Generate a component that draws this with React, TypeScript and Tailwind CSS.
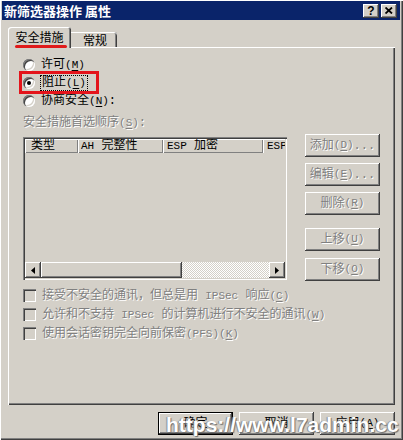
import React from 'react';

const raised =
    'shadow-[inset_-1px_-1px_0_#404040,inset_1px_1px_0_#ffffff,inset_-2px_-2px_0_#808080,inset_2px_2px_0_#d4d0c8]';
const sunken =
    'shadow-[inset_1px_1px_0_#808080,inset_2px_2px_0_#404040,inset_-1px_-1px_0_#ffffff,inset_-2px_-2px_0_#d4d0c8]';
const grayText = 'text-[#808080] [text-shadow:1px_1px_0_#ffffff]';

// access key hint such as "(M)", drawn narrow like the old bitmap font
function K({children}: {children: React.ReactNode}) {
    return (
        <span className="text-[11px]">
            (<span className="underline underline-offset-2">{children}</span>)
        </span>
    );
}

function Radio({checked}: {checked?: boolean}) {
    return (
        <span className={`w-[12px] h-[12px] rounded-full bg-white flex items-center justify-center shrink-0 ${sunken}`}>
            {checked && <span className="w-[4px] h-[4px] rounded-full bg-black" />}
        </span>
    );
}

function Check({children}: {children: React.ReactNode}) {
    return (
        <div className="flex items-center h-[19px]">
            <span className={`w-[13px] h-[13px] shrink-0 bg-[#d4d0c8] ${sunken}`} />
            <span className={`ml-[6px] whitespace-nowrap ${grayText}`}>{children}</span>
        </div>
    );
}

function SideButton({children, className = ''}: {children: React.ReactNode; className?: string}) {
    return (
        <div className={`w-[75px] h-[23px] flex items-center justify-center whitespace-nowrap ${raised} ${grayText} ${className}`}>
            {children}
        </div>
    );
}

function Arrow({dir}: {dir: 'left' | 'right'}) {
    return (
        <div className={`w-[16px] h-[16px] shrink-0 flex items-center justify-center bg-[#d4d0c8] ${raised}`}>
            <svg width="4" height="7" viewBox="0 0 4 7">
                {dir === 'left' ? <polygon points="4,0 4,7 0,3.5" fill="#000" /> : <polygon points="0,0 0,7 4,3.5" fill="#000" />}
            </svg>
        </div>
    );
}

export default function App() {
    return (
        <div className="w-[403px] h-[440px] bg-[#d4d0c8] relative overflow-hidden pl-[2px] pr-[3px] pt-[1px] flex flex-col text-[12px] leading-none text-black font-['Liberation_Mono','Noto_Sans_CJK_SC',monospace] shadow-[inset_1px_1px_0_#ffffff,inset_-1px_-1px_0_#404040,inset_-2px_-2px_0_#808080]">
            {/* title bar */}
            <div className="h-[19px] bg-[#0a246a] flex items-center justify-between pl-[2px] pr-[3px]">
                <span className="text-white font-bold text-[13px] font-['Noto_Sans_CJK_SC',sans-serif] whitespace-pre">新筛选器操作 属性</span>
                <div className="flex gap-[2px]">
                    <div className={`w-[16px] h-[14px] bg-[#d4d0c8] flex items-center justify-center font-bold text-[12px] font-['Liberation_Sans',sans-serif] ${raised}`}>
                        ?
                    </div>
                    <div className={`w-[16px] h-[14px] bg-[#d4d0c8] flex items-center justify-center ${raised}`}>
                        <svg width="8" height="7" viewBox="0 0 8 7">
                            <path d="M0.5 0.5 L7 6.5 M7 0.5 L0.5 6.5" stroke="#000" strokeWidth="1.8" />
                        </svg>
                    </div>
                </div>
            </div>

            <div className="pl-[6px] mt-[7px]">
                {/* tabs */}
                <div className="flex items-end h-[20px]">
                    <div className="relative z-10 w-[63px] h-[21px] -mb-[1px] bg-[#d4d0c8] rounded-t-[3px] flex items-center justify-center pb-[1px] shadow-[inset_1px_1px_0_#ffffff,inset_-1px_0_0_#404040,inset_-2px_0_0_#808080]">
                        <span className="font-['Noto_Sans_CJK_SC',sans-serif]">安全措施</span>
                        <span className="absolute left-[7px] bottom-[0px] w-[52px] h-[3px] rounded-full bg-[#e01b1b]" />
                    </div>
                    <div className="w-[46px] h-[15px] rounded-tr-[3px] flex items-center justify-center pl-[2px] shadow-[inset_0_1px_0_#ffffff,inset_-1px_0_0_#404040,inset_-2px_0_0_#808080]">
                        <span className="font-['Noto_Sans_CJK_SC',sans-serif]">常规</span>
                    </div>
                </div>

                {/* panel */}
                <div className="w-[387px] h-[358px] pl-[15px] pt-[9px] flex flex-col shadow-[inset_1px_1px_0_#ffffff,inset_-1px_-1px_0_#404040,inset_-2px_-2px_0_#808080]">
                    <div className="flex flex-col">
                        <div className="flex items-center h-[18px]">
                            <Radio />
                            <span className="ml-[6px]">许可<K>M</K></span>
                        </div>
                        <div className="relative flex items-center h-[18px]">
                            <Radio checked />
                            <span className="ml-[5px] px-[1px] py-[1px] border border-dotted border-black">阻止<K>L</K></span>
                            <span className="absolute -left-[4px] -top-[3px] w-[80px] h-[23px] border-[3px] border-[#e3141b]" />
                        </div>
                        <div className="flex items-center h-[18px]">
                            <Radio />
                            <span className="ml-[6px]">协商安全<K>N</K>:</span>
                        </div>
                    </div>

                    <div className={`h-[16px] mt-[5px] flex items-center ${grayText}`}>
                        安全措施首选顺序<K>S</K>:
                    </div>

                    <div className="flex mt-[3px] items-start">
                        <div className={`w-[264px] h-[143px] mt-[3px] p-[2px] flex flex-col ${sunken}`}>
                            <div className="flex h-[14px] overflow-hidden whitespace-nowrap text-[12px]">
                                <div className="w-[53px] shrink-0 pl-[6px] flex items-center shadow-[inset_1px_1px_0_#ffffff,inset_-1px_-1px_0_#808080]">类型</div>
                                <div className="w-[85px] shrink-0 pl-[3px] flex items-center shadow-[inset_1px_1px_0_#ffffff,inset_-1px_-1px_0_#808080]">
                                    <span className="text-[11px]">AH</span>&nbsp;完整性
                                </div>
                                <div className="w-[100px] shrink-0 pl-[4px] flex items-center shadow-[inset_1px_1px_0_#ffffff,inset_-1px_-1px_0_#808080]">
                                    <span className="text-[11px]">ESP</span>&nbsp;加密
                                </div>
                                <div className="flex-1 pl-[4px] flex items-center overflow-hidden shadow-[inset_1px_1px_0_#ffffff] text-[11px]">ESP</div>
                            </div>
                            <div className="flex-1" />
                            <div className="flex h-[16px]">
                                <Arrow dir="left" />
                                <div className={`w-[141px] shrink-0 bg-[#d4d0c8] ${raised}`} />
                                <div className="flex-1 bg-[repeating-conic-gradient(#ffffff_0_25%,#d4d0c8_0_50%)] bg-[length:2px_2px]" />
                                <Arrow dir="right" />
                            </div>
                        </div>

                        <div className="flex flex-col ml-[18px]">
                            <SideButton>添加<K>D</K>...</SideButton>
                            <SideButton className="mt-[6px]">编辑<K>E</K>...</SideButton>
                            <SideButton className="mt-[6px]">删除<K>R</K></SideButton>
                            <SideButton className="mt-[13px]">上移<K>U</K></SideButton>
                            <SideButton className="mt-[7px]">下移<K>O</K></SideButton>
                        </div>
                    </div>

                    <div className="flex flex-col mt-[5px]">
                        <Check>
                            接受不安全的通讯，但总是用 <span className="text-[11px]">IPSec</span> 响应<K>C</K>
                        </Check>
                        <Check>
                            允许和不支持 <span className="text-[11px]">IPSec</span> 的计算机进行不安全的通讯<K>W</K>
                        </Check>
                        <Check>
                            使用会话密钥完全向前保密<span className="text-[11px]">(PFS)</span><K>K</K>
                        </Check>
                    </div>
                </div>
            </div>

            {/* bottom buttons */}
            <div className="flex justify-end gap-[6px] mt-[7px] pr-[5px]">
                <div className={`w-[75px] h-[23px] border border-black flex items-center justify-center ${raised}`}>确定</div>
                <div className={`w-[75px] h-[23px] flex items-center justify-center ${raised}`}>取消</div>
                <div className={`w-[75px] h-[23px] flex items-center justify-center ${raised}`}>
                    应用<K>A</K>
                </div>
            </div>

            {/* watermark */}
            <div className="absolute left-[166px] top-[414px] text-[21px] font-bold text-white leading-none font-['Liberation_Sans',sans-serif] [text-shadow:1px_1px_1px_#6b6b6b,-1px_0_1px_#8a8a8a] whitespace-nowrap">
                https://www.l7admin.cc
            </div>
        </div>
    );
}
